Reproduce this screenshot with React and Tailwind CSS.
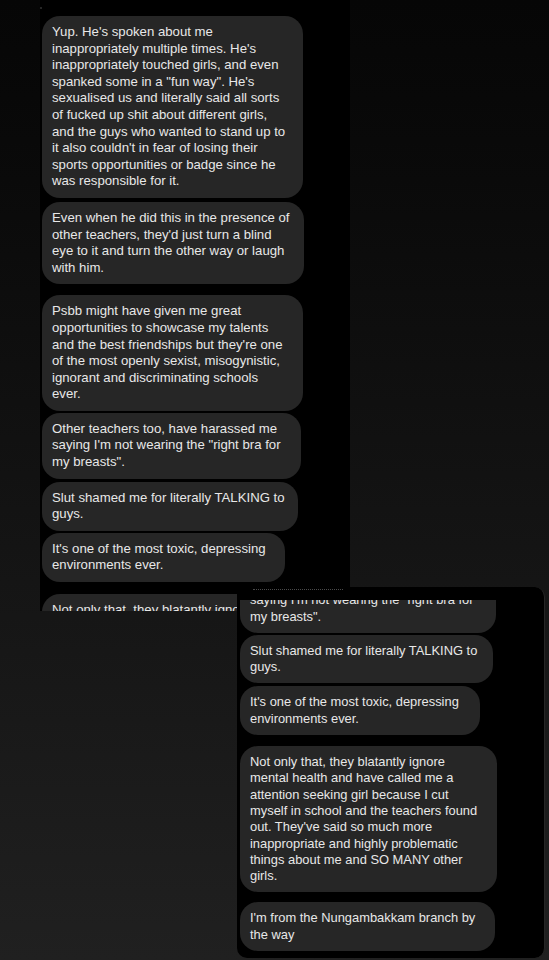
const firstShot = [
  {
    cls: 'w-[261px]',
    lines: [
      "Yup. He's spoken about me",
      "inappropriately multiple times. He's",
      'inappropriately touched girls, and even',
      'spanked some in a "fun way". He\'s',
      'sexualised us and literally said all sorts',
      'of fucked up shit about different girls,',
      'and the guys who wanted to stand up to',
      "it also couldn't in fear of losing their",
      'sports opportunities or badge since he',
      'was responsible for it.',
    ],
  },
  {
    cls: 'w-[262px] mt-[4px]',
    lines: [
      'Even when he did this in the presence of',
      "other teachers, they'd just turn a blind",
      'eye to it and turn the other way or laugh',
      'with him.',
    ],
  },
  {
    cls: 'w-[261px] mt-[11px]',
    lines: [
      'Psbb might have given me great',
      'opportunities to showcase my talents',
      "and the best friendships but they're one",
      'of the most openly sexist, misogynistic,',
      'ignorant and discriminating schools',
      'ever.',
    ],
  },
  {
    cls: 'w-[259px] mt-[2px]',
    lines: [
      'Other teachers too, have harassed me',
      'saying I\'m not wearing the "right bra for',
      'my breasts".',
    ],
  },
  {
    cls: 'w-[256px] mt-[3px]',
    lines: ['Slut shamed me for literally TALKING to', 'guys.'],
  },
  {
    cls: 'w-[243px] mt-[2px]',
    lines: ["It's one of the most toxic, depressing", 'environments ever.'],
  },
  {
    cls: 'w-[257px] mt-[12px]',
    lines: ['Not only that, they blatantly ignore', 'mental health and have called me a'],
  },
];

const secondShot = [
  {
    cls: 'w-[256px] -mt-[32px]',
    lines: [
      'Other teachers too, have harassed me',
      'saying I\'m not wearing the "right bra for',
      'my breasts".',
    ],
  },
  {
    cls: 'w-[253px] mt-[2px]',
    lines: ['Slut shamed me for literally TALKING to', 'guys.'],
  },
  {
    cls: 'w-[240px] mt-[3px]',
    lines: ["It's one of the most toxic, depressing", 'environments ever.'],
  },
  {
    cls: 'w-[257px] mt-[11px]',
    lines: [
      'Not only that, they blatantly ignore',
      'mental health and have called me a',
      'attention seeking girl because I cut',
      'myself in school and the teachers found',
      "out. They've said so much more",
      'inappropriate and highly problematic',
      'things about me and SO MANY other',
      'girls.',
    ],
  },
  {
    cls: 'w-[255px] mt-[10px]',
    lines: ["I'm from the Nungambakkam branch by", 'the way'],
  },
];

const Bubble = ({ cls, lines, small }) => (
  <div
    className={`${cls} shrink-0 rounded-[18px] bg-[#262626] px-[10px] py-[8px] text-[#e8e8e8] ${
      small ? 'text-[12.9px] leading-[16.3px]' : 'text-[13.2px] leading-[16.6px]'
    }`}
  >
    {lines.map((line, i) => (
      <div key={i} className="whitespace-nowrap">
        {line}
      </div>
    ))}
  </div>
);

export default function App() {
  return (
    <div className="h-[960px] w-[549px] overflow-hidden bg-gradient-to-b from-[#060606] to-[#202020] font-['Liberation_Sans',Arial,sans-serif]">
      {/* first screenshot */}
      <div className="ml-[40px] h-[611px] w-[310px] overflow-hidden bg-black pl-[2px]">
        <div className="ml-[-2px] h-[8px] pt-[7px]">
          <div className="h-[2px] w-[2px] rounded-full bg-[#333]" />
        </div>
        <div className="mt-[8px] flex flex-col">
          {firstShot.map((b, i) => (
            <Bubble key={i} {...b} />
          ))}
        </div>
      </div>

      {/* second screenshot, laid over the bottom of the first */}
      <div className="relative -mt-[24px] ml-[237px] flex h-[371px] w-[308px] flex-col overflow-hidden rounded-tr-[10px] rounded-b-[10px] border-r border-[#262626] bg-black pl-[3px] pt-[2px]">
        <div className="ml-[13px] w-[90px] border-t border-dotted border-[#4a4a4a]" />
        <div className="mt-[10px] flex flex-1 flex-col overflow-hidden">
          {secondShot.map((b, i) => (
            <Bubble key={i} {...b} small />
          ))}
        </div>
      </div>
    </div>
  );
}
